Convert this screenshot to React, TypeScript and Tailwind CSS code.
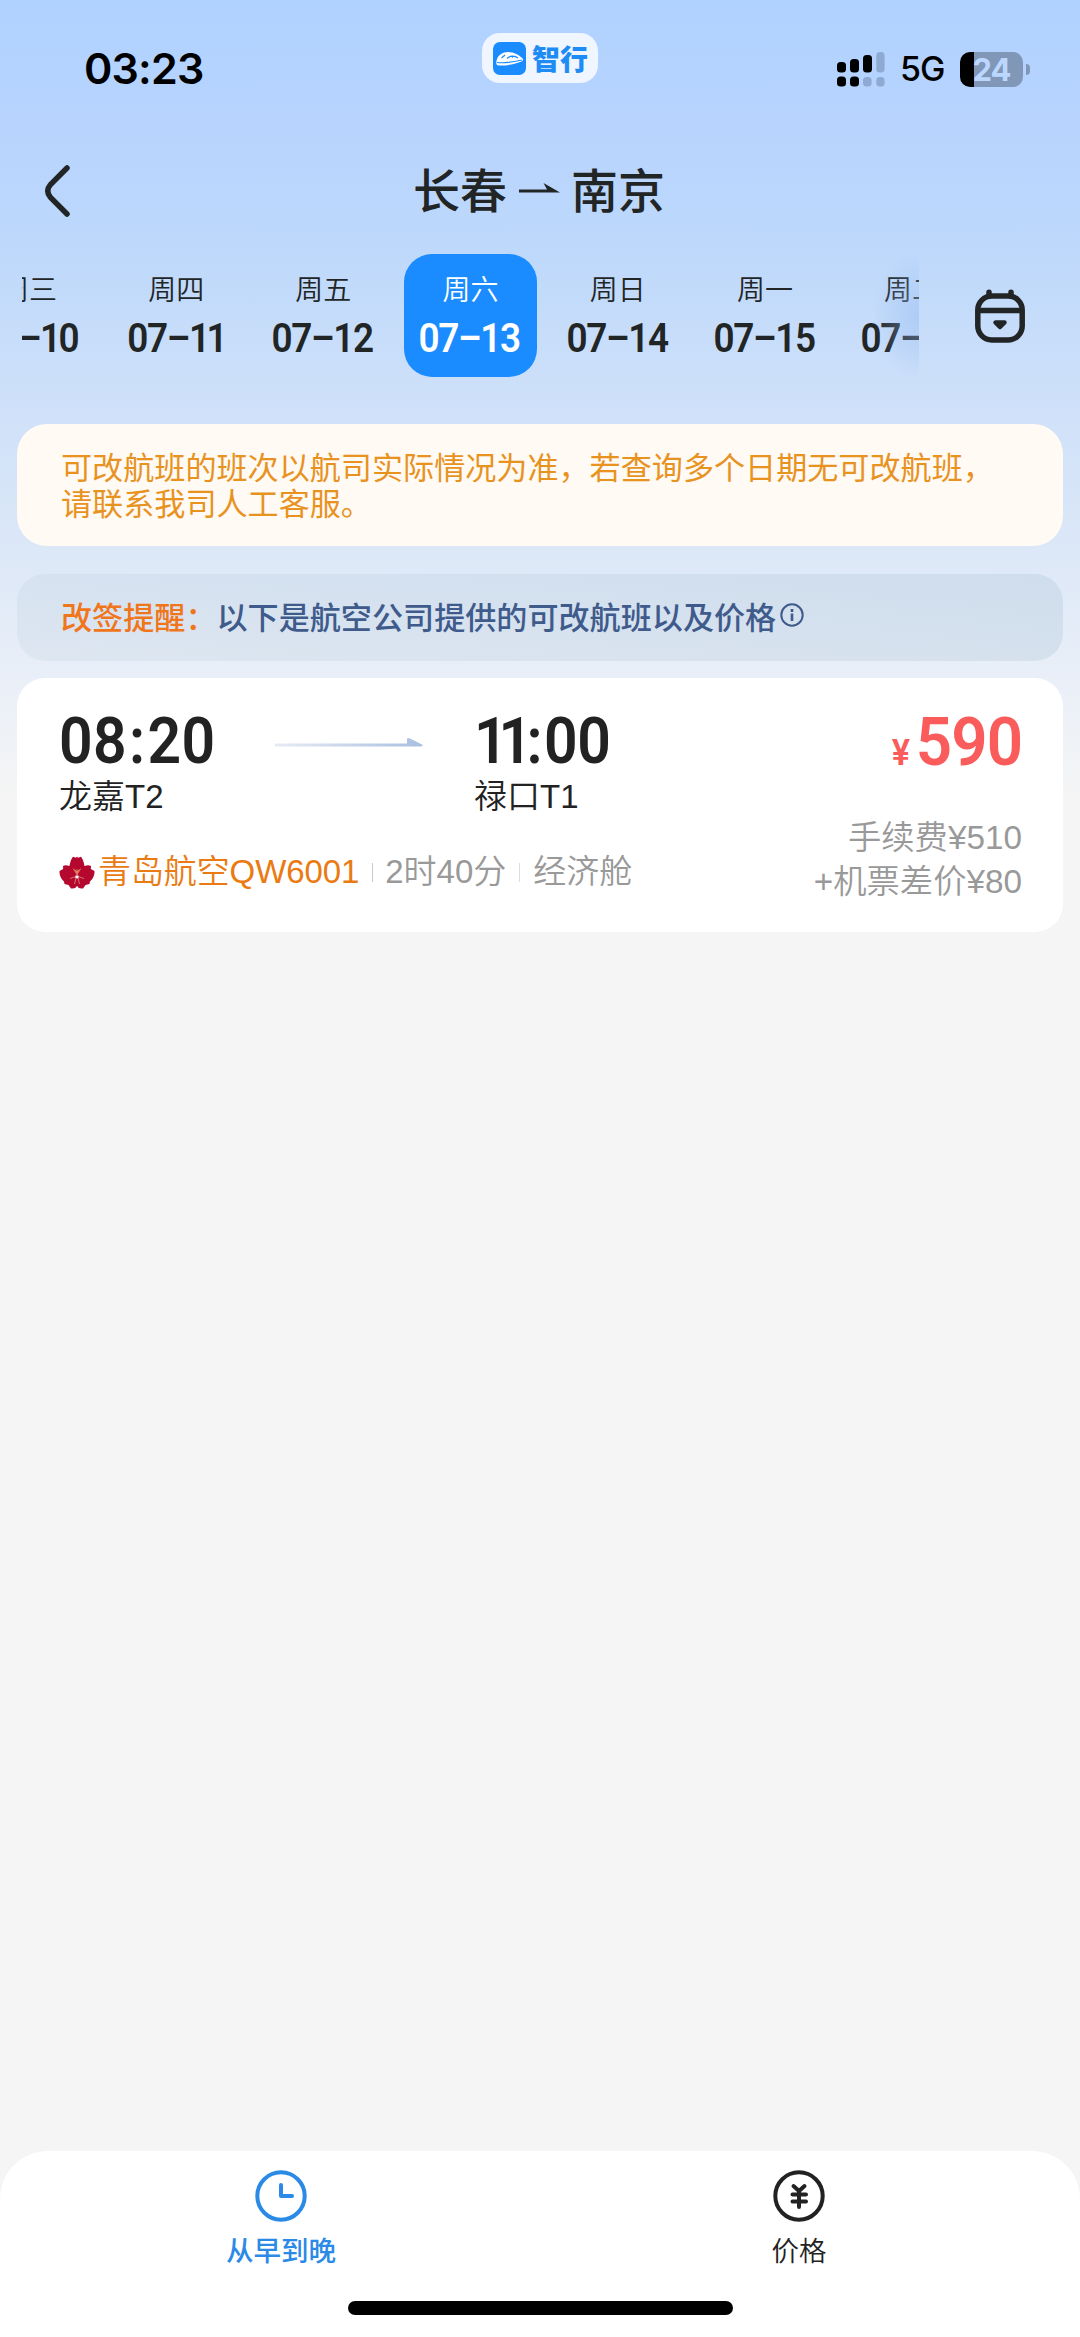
import React from 'react';

interface DayItem {
  week: string;
  date: React.ReactNode;
  active?: boolean;
}

const days: DayItem[] = [
  { week: '周三', date: <>07–<span className="tracking-[-3px]">10</span></> },
  { week: '周四', date: <>07–<span className="tracking-[-4px]">11</span></> },
  { week: '周五', date: '07–12' },
  { week: '周六', date: '07–13', active: true },
  { week: '周日', date: '07–14' },
  { week: '周一', date: '07–15' },
  { week: '周二', date: '07–16' },
];

const SignalIcon = () => (
  <svg width="48" height="36" viewBox="0 0 48 36" fill="#000">
    <rect x="0" y="11" width="9" height="10.5" rx="3.5" />
    <rect x="13" y="8" width="9" height="13.5" rx="3.5" />
    <rect x="26" y="4" width="9" height="17.5" rx="3.5" />
    <rect x="39.3" y="1" width="8.3" height="20.5" rx="3.5" fill="#8eaad2" />
    <rect x="0" y="25.5" width="9" height="10" rx="3.5" />
    <rect x="13" y="25.5" width="9" height="10" rx="3.5" />
    <rect x="26" y="26" width="8.6" height="9.5" rx="3.5" fill="#8eaad2" />
    <rect x="39.3" y="26" width="8.3" height="9.5" rx="3.5" fill="#8eaad2" />
  </svg>
);

const TrainLogo = () => (
  <svg width="33" height="33" viewBox="0 0 33 33">
    <rect width="33" height="33" rx="7" fill="#1a8cff" />
    <path d="M3.500 19C4.500 13 10 10 15 10c6 0 11.500 3 15 7 .5 2-2 3-6 4-6 1.800-13 3-18 2.500-3 0-3-2.500-2.500-4.500z" fill="#fff" />
    <path d="M8.500 16l3.500-3M14 16.500c3-3 8-3 11-.5M4 20.500c7 .8 16-.5 25-2.500M19.500 13.800v2" stroke="#1a8cff" strokeWidth="1.200" fill="none" />
  </svg>
);

const CalendarIcon = () => (
  <svg width="50" height="54" viewBox="0 0 50 54" fill="none" stroke="#222526" strokeWidth="5.500" strokeLinecap="round">
    <rect x="2.800" y="7" width="44.400" height="44" rx="14" />
    <path d="M3.500 21.500h43" strokeLinecap="butt" />
    <path d="M14 3.200v4M36 3.200v4" />
    <path d="M20.500 33.500h9L25 38z" strokeWidth="4.500" strokeLinejoin="round" fill="#222526" />
  </svg>
);

const FlowerLogo = () => (
  <svg width="36" height="33" viewBox="0 0 36 33">
    <g fill="#b5082f">
      <ellipse cx="18" cy="19" rx="13" ry="11" />
      <path d="M10 14C10.500 8 12 3 14 .8l3 .9 1-1.200 1 1.200 3-.9C24 3 25.500 8 26 14z" />
      <path d="M14 13C11 9.500 7 8.500 4 10l.2 3L.5 15c-.3 5 2.500 9.500 6.500 12z" />
      <path d="M22 13c3-3.500 7-4.500 10-3l-.2 3 3.700 2c.3 5-2.500 9.500-6.500 12z" />
      <path d="M6 22c-1 2.500-1 4.500-.5 6l4 1 2.500 3.500c4 .3 6-1 6-4z" />
      <path d="M30 22c1 2.500 1 4.500.5 6l-4 1-2.500 3.500c-4 .3-6-1-6-4z" />
    </g>
    <path d="M13.500 12l4.500 7.500 4.500-7.500-4.500 3z" fill="#e27a53" />
    <path d="M18 13v6M11 22.500l6-2M25 22.500l-6-2M17 22l-1.500 6M19 22l1.500 6" stroke="#dc7a78" strokeWidth=".9" fill="none" />
    <path d="M16.500 19.500h3v2.800h-3z" fill="#fff" />
  </svg>
);

const Day: React.FC<DayItem> = ({ week, date, active }) => (
  <div
    className={`flex h-[123px] w-[133px] shrink-0 flex-col items-center rounded-[28px] ${
      active ? 'bg-[#1a8cff] text-white' : 'text-[#222526]'
    }`}
  >
    <span className="mt-[17px] text-[28px] leading-[40px] font-[350]">{week}</span>
    <span className="mt-[3px] mr-[2px] scale-x-[0.9] font-['Roboto'] text-[41px] leading-[48px] font-semibold tracking-[-1.500px] whitespace-nowrap">{date}</span>
  </div>
);

const StatusBar = () => (
  <header className="flex h-[120px] shrink-0 items-start font-['Inter'] text-black">
    <div className="w-[482px] pt-[42px] pl-[84px] text-[43px] leading-[52px] font-semibold tracking-[-0.8px]">03:23</div>
    <div className="mt-[33px] flex h-[50px] w-[116px] items-center rounded-[18px] bg-[#f0f6ff] pl-[11px]">
      <TrainLogo />
      <span className="ml-[6px] font-['Noto_Sans_CJK_SC'] text-[28px] leading-[40px] font-black whitespace-nowrap text-[#1f8cf5]">智行</span>
    </div>
    <div className="mt-[51px] ml-[239px] flex h-[36px] items-center">
      <SignalIcon />
      <span className="ml-[15px] w-[47px] text-[34px] leading-[36px] font-medium tracking-[-1px]">5G</span>
      <div className="ml-[13px] flex h-[35px] w-[63px] items-center justify-center rounded-[10px] bg-[linear-gradient(90deg,#000_23%,#8097b8_23%)] text-[31px] leading-none font-bold tracking-[-1px] text-[#bcd7ff]">
        24
      </div>
      <div className="ml-[3px] h-[11px] w-[3.500px] rounded-r-full bg-[#8097b8]" />
    </div>
  </header>
);

const TitleBar = () => (
  <div className="flex h-[134px] shrink-0 items-start text-[#222526]">
    <svg className="mt-[44px] ml-[44px]" width="27" height="54" viewBox="0 0 27 54" fill="none" stroke="#222526" strokeWidth="5.500" strokeLinecap="round">
      <path d="M23 4L6.500 20.500Q1 27 6.500 33.500L23 50" />
    </svg>
    <h1 className="mt-[37px] ml-[342px] flex items-center text-[47px] leading-[70px] font-medium">
      长春
      <svg className="mr-[11px] ml-[12px] mb-[4px]" width="41" height="16" viewBox="0 0 41 16">
        <path d="M0 7.500h28L24.500 1 41 10.500H0z" fill="#222526" />
      </svg>
      南京
    </h1>
  </div>
);

const DateStrip = () => (
  <div className="flex h-[123px] shrink-0 pl-[22px]">
    <div className="relative w-[897px] overflow-hidden">
      <div className="ml-[-59.500px] flex gap-[14.200px]">
        {days.map((day) => (
          <Day key={day.week} {...day} />
        ))}
      </div>
      <div className="absolute inset-y-0 right-0 w-[44px] bg-[radial-gradient(ellipse_at_right,rgba(150,188,242,0.5),rgba(170,200,245,0)_75%)]" />
    </div>
    <div className="mt-[35px] ml-[55.500px]">
      <CalendarIcon />
    </div>
  </div>
);

const FlightCard = () => (
  <section className="mx-[17px] mt-[17px] flex h-[254px] shrink-0 justify-between rounded-[28px] bg-white pr-[41px] pl-[42px] text-[33px] font-[350] text-[#222]">
    <div>
      <div className="flex pt-[26px]">
        <div className="w-[214px]">
          <div className="origin-left scale-x-[0.92] font-['Roboto'] text-[64px] leading-[76px] font-semibold tracking-[0.5px]">
            08<span className="mx-[2px]">:</span>20
          </div>
          <div className="mt-[-1px] leading-[36px]">龙嘉T2</div>
        </div>
        <svg className="mt-[33px]" width="150" height="12" viewBox="0 0 150 12">
          <defs>
            <linearGradient id="route" x1="0" x2="1">
              <stop offset="0" stopColor="#e6ebf3" />
              <stop offset="1" stopColor="#a9bfe0" />
            </linearGradient>
          </defs>
          <path d="M2 6.500h132V1.500q1-1 3 0L149 7.500q2 2-2 2H2z" fill="url(#route)" />
        </svg>
        <div className="ml-[51px]">
          <div className="w-[140px] origin-left scale-x-[0.92] font-['Roboto'] text-[64px] leading-[76px] font-semibold tracking-[0.5px] whitespace-nowrap">
            <span className="tracking-[-10px]">1</span><span className="tracking-[-6px]">1</span>
            <span className="mr-[1px]">:</span><span className="tracking-[-0.5px]">00</span>
          </div>
          <div className="mt-[-1px] leading-[36px]">禄口T1</div>
        </div>
      </div>
      <div className="mt-[37px] flex items-center leading-[40px] text-[#999]">
        <FlowerLogo />
        <span className="ml-[3px] tracking-[-0.1px] text-[#ea7a12]">青岛航空QW6001</span>
        <i className="mx-[12.500px] h-[19px] w-px bg-[#ccc]" />
        <span>2时40分</span>
        <i className="mx-[13px] h-[19px] w-px bg-[#ddd]" />
        <span>经济舱</span>
      </div>
    </div>
    <div className="flex flex-col items-end pt-[26px]">
      <div className="origin-right scale-x-[0.95] font-['Roboto'] text-[67px] leading-[76px] font-semibold text-[#fa5b5b]">
        <span className="mr-[6px] text-[36px]">¥</span>
        <span className="tracking-[-1px]">590</span>
      </div>
      <div className="mt-[25px] text-right text-[33.300px] leading-[44px] text-[#999]">
        <p>手续费¥510</p>
        <p>+机票差价¥80</p>
      </div>
    </div>
  </section>
);

const TabBar = () => (
  <nav className="mt-auto flex h-[186px] shrink-0 flex-col rounded-t-[48px] bg-white px-[22px] text-[27.500px] leading-[36px]">
    <div className="flex">
      <div className="flex flex-1 flex-col items-center pt-[19px] text-[#2b8ae6]">
        <svg width="52" height="52" viewBox="0 0 52 52" fill="none" stroke="currentColor" strokeWidth="4" strokeLinecap="round">
          <circle cx="26" cy="26" r="23.700" />
          <path d="M26 15v11h11" strokeLinejoin="round" />
        </svg>
        <span className="mt-[12px] font-medium">从早到晚</span>
      </div>
      <div className="flex flex-1 flex-col items-center pt-[19px] text-[#222]">
        <svg width="52" height="52" viewBox="0 0 52 52" fill="none" stroke="currentColor" strokeWidth="4" strokeLinecap="round">
          <circle cx="26" cy="26" r="23.700" />
          <path d="M20.500 16l5.500 5 5.500-5M26 21v16M19.500 24.500h13.500M19.500 31.500h13.500" />
        </svg>
        <span className="mt-[12px] font-[350]">价格</span>
      </div>
    </div>
    <div className="mt-[31px] ml-[326px] h-[14px] w-[385px] shrink-0 rounded-full bg-black" />
  </nav>
);

const App = () => {
  return (
    <div className="flex h-[2337px] w-[1080px] flex-col overflow-hidden bg-[#f5f5f5] bg-[linear-gradient(180deg,#b0d2ff_0px,#b6d3ff_100px,#bdd8fb_240px,#cfe1f9_410px,#dde8f7_560px,#e9eff8_675px,#f5f5f5_800px)] font-['Liberation_Sans','Noto_Sans_CJK_SC',sans-serif]">
      <StatusBar />
      <TitleBar />
      <DateStrip />
      <p className="mx-[17px] mt-[47px] h-[122px] shrink-0 rounded-[30px] bg-[#fffaf4] pt-[27px] pl-[44px] text-[31.100px] leading-[36px] text-[#e8921f]">
        可改航班的班次以航司实际情况为准，若查询多个日期无可改航班，<br />请联系我司人工客服。
      </p>
      <div className="mx-[17px] mt-[28px] flex h-[87px] shrink-0 items-center rounded-[28px] bg-[linear-gradient(90deg,rgba(175,195,210,0.18),rgba(165,190,208,0.28))] pt-[3px] pl-[44px] text-[31.100px] font-medium text-[#3f5b8c]">
        <span className="text-[#f0761c]">改签提醒：</span>
        以下是航空公司提供的可改航班以及价格
        <svg className="mb-[9px] ml-[4px]" width="24" height="24" viewBox="0 0 24 24" fill="none" stroke="currentColor" strokeWidth="2">
          <circle cx="12" cy="12" r="10.700" />
          <path d="M12 10.500v7.500M12 6v3" strokeWidth="2.600" />
        </svg>
      </div>
      <FlightCard />
      <TabBar />
    </div>
  );
};

export default App;
